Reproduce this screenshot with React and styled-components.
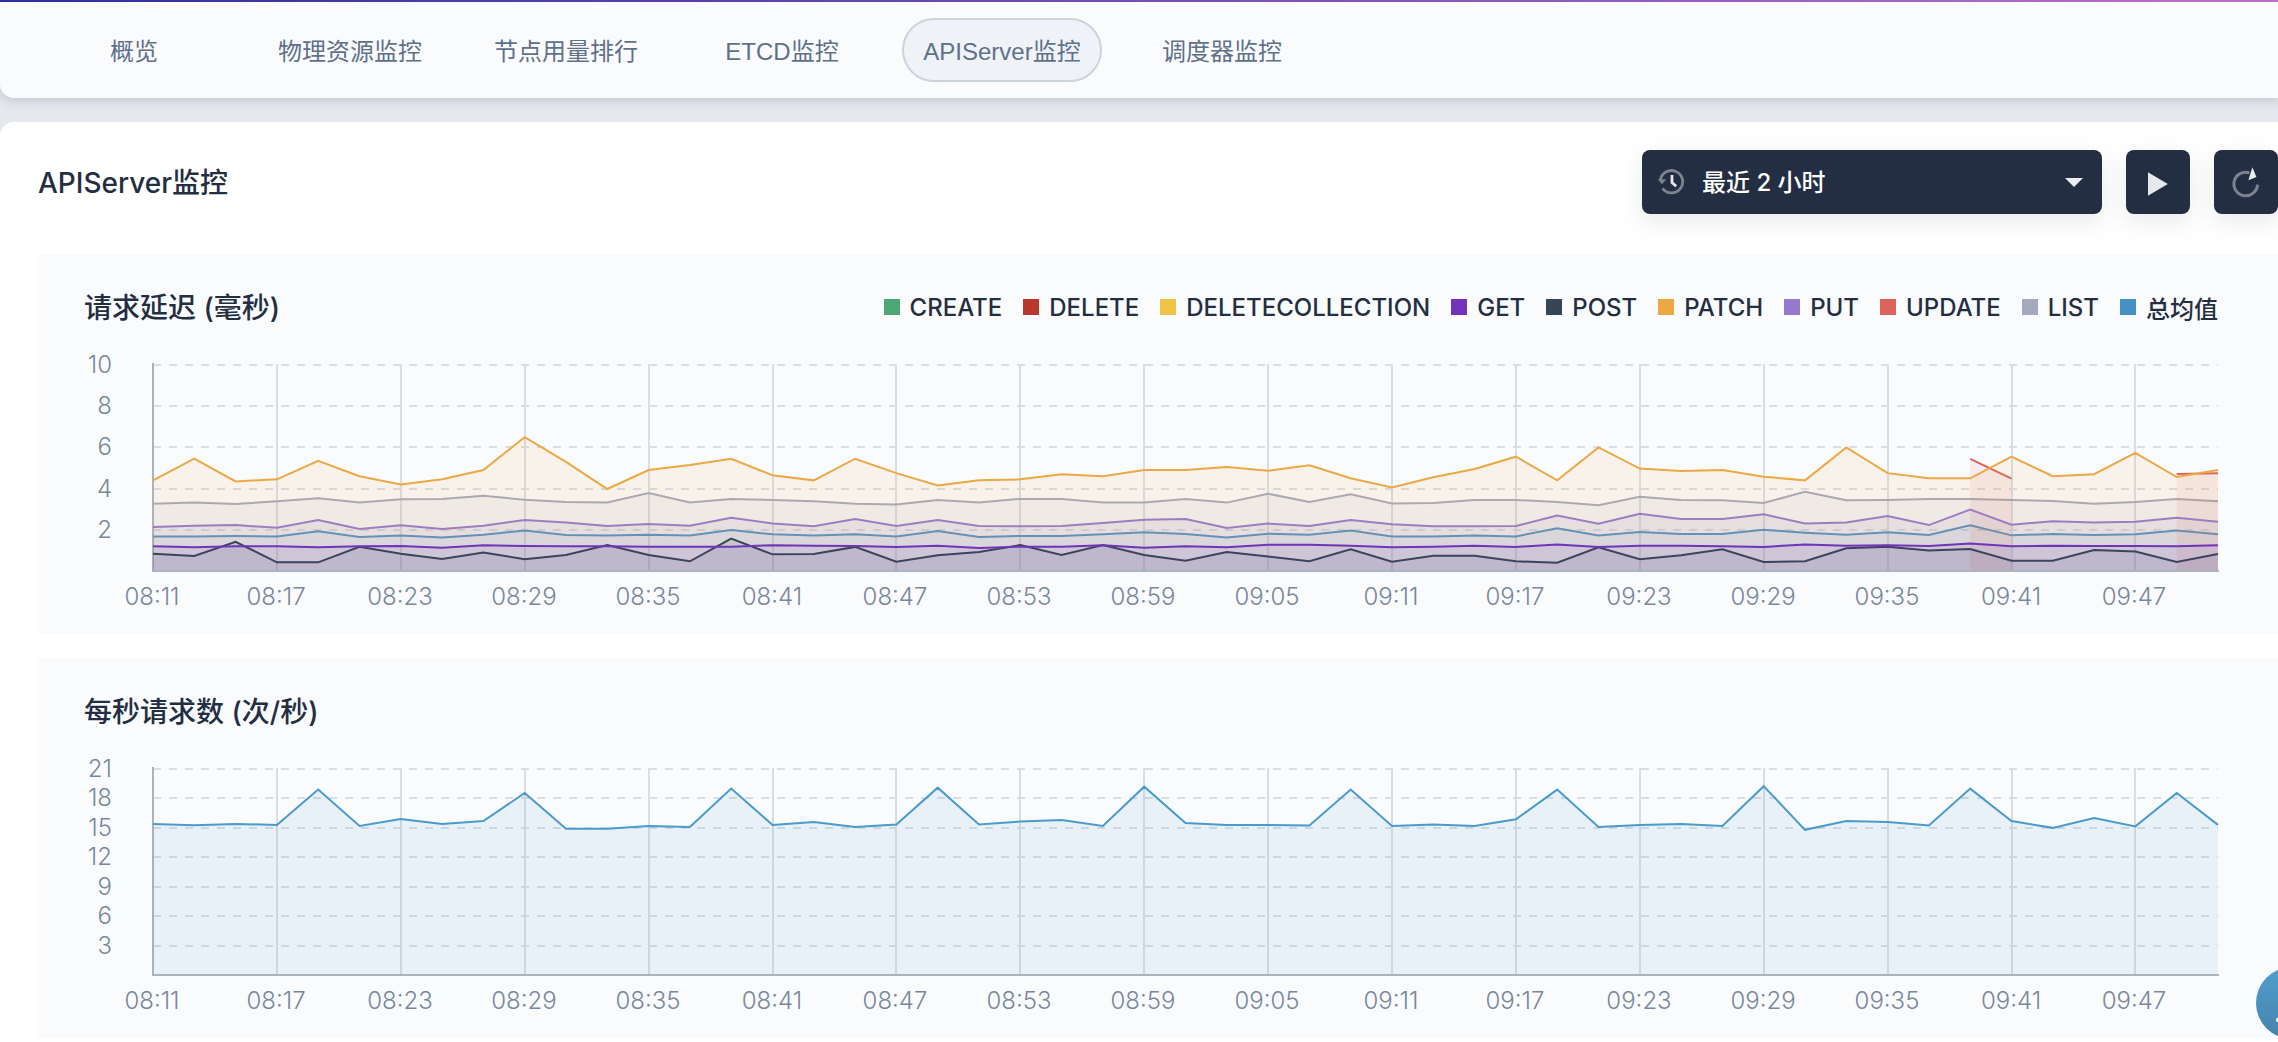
import { useLayoutEffect, useRef, useState } from "react";
import styled, { createGlobalStyle } from "styled-components";

const tabs = [
  "概览",
  "物理资源监控",
  "节点用量排行",
  "ETCD监控",
  "APIServer监控",
  "调度器监控",
];

const ranges = ["最近 2 小时", "最近 5 小时", "最近 12 小时", "最近 1 天"];

const times = [
  "08:11", "08:17", "08:23", "08:29", "08:35", "08:41", "08:47", "08:53", "08:59",
  "09:05", "09:11", "09:17", "09:23", "09:29", "09:35", "09:41", "09:47",
];

const gap = (count) => Array(count).fill(null);

const latency = [
  { name: "CREATE", color: "#4ca776", values: [] },
  { name: "DELETE", color: "#bb372b", values: [] },
  { name: "DELETECOLLECTION", color: "#f0c446", values: [] },
  {
    name: "GET",
    color: "#7033ba",
    values: [
      1.2, 1.15, 1.2, 1.2, 1.15, 1.2, 1.21, 1.13, 1.25, 1.21, 1.2, 1.2, 1.18,
      1.18, 1.18, 1.25, 1.23, 1.21, 1.17, 1.23, 1.12, 1.18, 1.18, 1.25, 1.13,
      1.2, 1.15, 1.28, 1.28, 1.23, 1.15, 1.18, 1.23, 1.17, 1.29, 1.17, 1.23,
      1.23, 1.2, 1.17, 1.29, 1.23, 1.25, 1.21, 1.33, 1.2, 1.23, 1.21, 1.21,
      1.2, 1.25,
    ],
  },
  {
    name: "POST",
    color: "#374655",
    values: [
      0.84, 0.73, 1.42, 0.42, 0.42, 1.18, 0.84, 0.58, 0.9, 0.57, 0.78, 1.26,
      0.78, 0.47, 1.57, 0.81, 0.83, 1.17, 0.45, 0.76, 0.92, 1.26, 0.78, 1.26,
      0.78, 0.5, 0.92, 0.7, 0.47, 1.05, 0.45, 0.74, 0.74, 0.47, 0.4, 1.15,
      0.57, 0.76, 1.05, 0.44, 0.47, 1.1, 1.18, 0.99, 1.07, 0.5, 0.5, 1.02,
      0.95, 0.44, 0.83,
    ],
  },
  {
    name: "PATCH",
    color: "#eba845",
    values: [
      4.4, 5.45, 4.35, 4.45, 5.35, 4.6, 4.2, 4.45, 4.9, 6.5, 5.3, 3.98, 4.9,
      5.15, 5.45, 4.65, 4.4, 5.45, 4.75, 4.15, 4.4, 4.45, 4.7, 4.6, 4.9, 4.9,
      5.05, 4.87, 5.13, 4.5, 4.05, 4.55, 4.95, 5.55, 4.4, 6, 4.97, 4.85, 4.9,
      4.58, 4.4, 6, 4.75, 4.5, 4.5, 5.55, 4.6, 4.7, 5.73, 4.56, 4.9,
    ],
  },
  {
    name: "PUT",
    color: "#9678d0",
    values: [
      2.14, 2.2, 2.23, 2.1, 2.48, 2.04, 2.22, 2.04, 2.2, 2.48, 2.35, 2.18,
      2.28, 2.2, 2.59, 2.31, 2.17, 2.52, 2.18, 2.48, 2.18, 2.17, 2.18, 2.33,
      2.49, 2.52, 2.09, 2.3, 2.18, 2.48, 2.27, 2.17, 2.17, 2.18, 2.69, 2.3,
      2.78, 2.52, 2.52, 2.75, 2.31, 2.36, 2.67, 2.23, 2.98, 2.25, 2.41, 2.36,
      2.39, 2.59, 2.39,
    ],
  },
  {
    name: "UPDATE",
    color: "#dc625c",
    values: [...gap(44), 5.44, 4.48, ...gap(3), 4.71, 4.74],
  },
  {
    name: "LIST",
    color: "#a4a9be",
    values: [
      3.27, 3.33, 3.25, 3.38, 3.53, 3.33, 3.48, 3.5, 3.65, 3.46, 3.35, 3.33,
      3.79, 3.33, 3.5, 3.45, 3.38, 3.27, 3.23, 3.45, 3.33, 3.5, 3.5, 3.32,
      3.32, 3.5, 3.32, 3.75, 3.35, 3.72, 3.28, 3.3, 3.45, 3.45, 3.35, 3.19,
      3.6, 3.45, 3.43, 3.3, 3.85, 3.43, 3.45, 3.5, 3.5, 3.45, 3.4, 3.27, 3.35,
      3.5, 3.38,
    ],
  },
  {
    name: "总均值",
    color: "#4590c5",
    values: [
      1.68, 1.68, 1.7, 1.68, 1.93, 1.65, 1.72, 1.63, 1.76, 1.96, 1.75, 1.72,
      1.76, 1.72, 1.99, 1.78, 1.72, 1.78, 1.68, 1.94, 1.65, 1.7, 1.7, 1.78,
      1.88, 1.8, 1.63, 1.81, 1.76, 1.96, 1.68, 1.68, 1.72, 1.68, 2.07, 1.72,
      1.89, 1.8, 1.8, 2, 1.86, 1.76, 1.88, 1.75, 2.22, 1.73, 1.8, 1.75, 1.78,
      1.97, 1.78,
    ],
  },
];

const requests = [
  {
    name: "每秒请求数",
    color: "#4a9bcb",
    values: [
      15.4, 15.26, 15.4, 15.3, 18.9, 15.2, 15.9, 15.4, 15.7, 18.55, 14.9, 14.9,
      15.2, 15.1, 19, 15.3, 15.6, 15.1, 15.35, 19.1, 15.35, 15.65, 15.8, 15.2,
      19.2, 15.5, 15.3, 15.3, 15.25, 18.9, 15.2, 15.35, 15.2, 15.87, 18.9,
      15.1, 15.3, 15.4, 15.2, 19.25, 14.8, 15.7, 15.6, 15.25, 19, 15.7, 15, 16,
      15.15, 18.55, 15.3,
    ],
  },
];

const LAST_POINT = 50;
const POINTS_PER_TICK = 3;
const PLOT = { left: 69, top: 19, bottom: 225 };

// cut a series into runs of points, so that missing samples leave a hole
function getSegments(values) {
  const segments = [];
  let current = [];
  values.forEach((value, index) => {
    if (value === null) {
      if (current.length) segments.push(current);
      current = [];
    } else {
      current.push([index, value]);
    }
  });
  if (current.length) segments.push(current);
  return segments;
}

function AreaChart({ series, ticks, label }) {
  const boxRef = useRef(null);
  const [width, setWidth] = useState(0);

  useLayoutEffect(() => {
    const measure = () => setWidth(boxRef.current.clientWidth);
    measure();
    const observer = new ResizeObserver(measure);
    observer.observe(boxRef.current);
    return () => observer.disconnect();
  }, []);

  const max = ticks[0];
  const getX = (index) =>
    PLOT.left + ((width - PLOT.left) * index) / LAST_POINT;
  const getY = (value) =>
    PLOT.bottom - ((PLOT.bottom - PLOT.top) * value) / max;

  return (
    <ChartBox ref={boxRef}>
      {width > 0 && (
        <ChartSvg role="img" aria-label={label}>
          {ticks.map((tick) => (
            <g key={tick}>
              <GridLine
                $dashed
                x1={PLOT.left}
                x2={width}
                y1={Math.round(getY(tick))}
                y2={Math.round(getY(tick))}
              />
              <AxisLabel x={28} y={Math.round(getY(tick)) + 8} textAnchor="end">
                {tick}
              </AxisLabel>
            </g>
          ))}
          {times.map((time, index) => {
            const x = Math.round(getX(index * POINTS_PER_TICK));
            return (
              <g key={time}>
                {index > 0 && (
                  <GridLine x1={x} x2={x} y1={PLOT.top - 1} y2={PLOT.bottom} />
                )}
                <AxisLabel x={x - 1} y={PLOT.bottom + 34} textAnchor="middle">
                  {time}
                </AxisLabel>
              </g>
            );
          })}
          <AxisLine
            x1={PLOT.left}
            x2={PLOT.left}
            y1={PLOT.top - 2}
            y2={PLOT.bottom}
          />
          {[...series].reverse().map(({ name, color, values }) =>
            getSegments(values).map((segment) => {
              const line = segment
                .map(([index, value]) => `${getX(index)},${getY(value)}`)
                .join(" L");
              const start = getX(segment[0][0]);
              const end = getX(segment[segment.length - 1][0]);
              return (
                <g key={`${name}-${segment[0][0]}`}>
                  <path
                    d={`M${start},${PLOT.bottom} L${line} L${end},${PLOT.bottom}Z`}
                    fill={color}
                    fillOpacity="0.1"
                  />
                  <path
                    d={`M${line}`}
                    fill="none"
                    stroke={color}
                    strokeWidth="2"
                  />
                </g>
              );
            })
          )}
          <AxisLine
            x1={PLOT.left - 1}
            x2={width + 1}
            y1={PLOT.bottom}
            y2={PLOT.bottom}
          />
        </ChartSvg>
      )}
    </ChartBox>
  );
}

function HistoryIcon() {
  return (
    <svg width="28" height="28" viewBox="0 0 28 28" fill="none" aria-hidden="true">
      <path
        d="M2.4 12.3A11.2 11.2 0 1 1 4.5 20.4"
        stroke="#7d838e"
        strokeWidth="2.8"
      />
      <path d="M-0.2 11.2h8.4l-4.2 5z" fill="#7d838e" />
      <path d="M14 7v7.6l4.2 3.6" stroke="#e6e8eb" strokeWidth="2.8" />
    </svg>
  );
}

function RefreshIcon() {
  return (
    <svg width="32" height="32" viewBox="0 0 32 32" fill="none" aria-hidden="true">
      <path
        d="M19.5 6.8A11.8 11.8 0 1 0 27.5 18.6"
        stroke="#7d838e"
        strokeWidth="3"
      />
      <path d="M22.4 1.3l4 9.6-8 3.3z" fill="#eceef0" />
    </svg>
  );
}

export default function App() {
  const [activeTab, setActiveTab] = useState("APIServer监控");
  const [range, setRange] = useState(ranges[0]);

  return (
    <Page>
      <GlobalStyle />
      <TabBar>
        {tabs.map((tab) => (
          <Tab
            key={tab}
            type="button"
            $active={tab === activeTab}
            onClick={() => setActiveTab(tab)}
          >
            {tab}
          </Tab>
        ))}
      </TabBar>
      <Panel>
        <PanelHeader>
          <PanelTitle>APIServer监控</PanelTitle>
          <Controls>
            <SelectBox>
              <HistoryIcon />
              <Select
                aria-label="时间范围"
                value={range}
                onChange={(event) => setRange(event.target.value)}
              >
                {ranges.map((option) => (
                  <option key={option}>{option}</option>
                ))}
              </Select>
              <Caret width="18" height="9" viewBox="0 0 18 9" aria-hidden="true">
                <path d="M0 0h18l-9 9z" fill="#eceef0" />
              </Caret>
            </SelectBox>
            <IconButton type="button" aria-label="播放">
              <svg width="32" height="32" viewBox="0 0 32 32" aria-hidden="true">
                <path d="M6 6.3v23.4l19.8-11.7z" fill="#e6e8eb" />
              </svg>
            </IconButton>
            <IconButton type="button" aria-label="刷新">
              <RefreshIcon />
            </IconButton>
          </Controls>
        </PanelHeader>
        <Card>
          <CardHeader>
            <CardTitle>请求延迟 (毫秒)</CardTitle>
            <Legend>
              {latency.map(({ name, color }) => (
                <LegendItem key={name} $color={color}>
                  {name}
                </LegendItem>
              ))}
            </Legend>
          </CardHeader>
          <AreaChart
            label="请求延迟"
            series={latency}
            ticks={[10, 8, 6, 4, 2]}
          />
        </Card>
        <Card>
          <CardHeader>
            <CardTitle>每秒请求数 (次/秒)</CardTitle>
          </CardHeader>
          <AreaChart
            label="每秒请求数"
            series={requests}
            ticks={[21, 18, 15, 12, 9, 6, 3]}
          />
        </Card>
      </Panel>
      <HelpButton type="button" aria-label="工具箱">
        <svg width="40" height="40" viewBox="0 0 40 40" aria-hidden="true">
          <path
            d="M6 37l10-10M24 5l11 11-9 9-11-11z"
            fill="none"
            stroke="#fff"
            strokeWidth="4"
            strokeLinecap="round"
          />
        </svg>
      </HelpButton>
    </Page>
  );
}

const GlobalStyle = createGlobalStyle`
  * {
    box-sizing: border-box;
  }

  body {
    margin: 0;
    background-color: #e5e9ee;
    color: #242e42;
    font-family: Inter, "Noto Sans CJK SC", sans-serif;
    font-size: 24px;
    overflow-x: hidden;
  }

  button,
  select {
    font: inherit;
    cursor: pointer;
  }
`;

const Page = styled.div`
  display: flex;
  flex-direction: column;
  gap: 24px;
  min-height: 100vh;

  &::before {
    content: "";
    position: fixed;
    inset: 0 0 auto;
    height: 2px;
    background: linear-gradient(90deg, #2c2ea2, #8d58bd 67%, #bb6fcc);
  }
`;

const TabBar = styled.nav`
  display: flex;
  align-items: center;
  gap: 20px;
  padding: 18px 36px 16px;
  background-color: #fafbfd;
  border-radius: 0 0 0 14px;
  box-shadow: 0 4px 8px rgba(36, 46, 66, 0.16);
`;

const Tab = styled.button`
  min-width: ${({ $active }) => ($active ? "200px" : "196px")};
  height: 64px;
  margin: ${({ $active }) => ($active ? "0 2px" : "0")};
  padding: 0 0 2px;
  border: ${({ $active }) => ($active ? "2px solid #ccd3db" : "none")};
  border-radius: 32px;
  background-color: ${({ $active }) => ($active ? "#eff3f8" : "transparent")};
  color: #5f708a;
  font-family: "Liberation Sans", "Noto Sans CJK SC", sans-serif;
`;

const Panel = styled.main`
  display: flex;
  flex-direction: column;
  flex: 1;
  gap: 24px;
  padding: 28px 0 4px 38px;
  background-color: #fff;
  border-radius: 14px 0 0 0;
`;

const PanelHeader = styled.header`
  display: flex;
  align-items: center;
  justify-content: space-between;
  margin-bottom: 16px;
`;

const PanelTitle = styled.h1`
  margin: 0;
  padding-bottom: 2px;
  font-size: 28px;
  font-weight: 500;
`;

const Controls = styled.div`
  display: flex;
  gap: 24px;
`;

const SelectBox = styled.div`
  position: relative;
  display: flex;
  align-items: center;
  width: 460px;
  height: 64px;
  padding-left: 16px;
  border-radius: 8px;
  background-color: #242e42;
  box-shadow: 0 8px 24px rgba(36, 46, 66, 0.1);
`;

const Select = styled.select`
  flex: 1;
  height: 100%;
  padding: 0 48px 0 16px;
  border: none;
  background: none;
  color: #fff;
  font-weight: 500;
  appearance: none;
`;

const Caret = styled.svg`
  position: absolute;
  right: 19px;
  pointer-events: none;
`;

const IconButton = styled.button`
  display: flex;
  align-items: center;
  justify-content: center;
  width: 64px;
  height: 64px;
  padding: 0;
  border: none;
  border-radius: 8px;
  background-color: #242e42;
  box-shadow: 0 8px 24px rgba(36, 46, 66, 0.1);
`;

const Card = styled.section`
  padding: 33px 60px 18px 46px;
  background-color: #fafbfd;
`;

const CardHeader = styled.div`
  display: flex;
  align-items: center;
  justify-content: space-between;
  height: 40px;
  margin-bottom: 19px;
`;

const CardTitle = styled.h2`
  margin: 0;
  padding-bottom: 2px;
  font-size: 28px;
  font-weight: 500;
`;

const Legend = styled.ul`
  display: flex;
  gap: 21px;
  margin: 0;
  padding: 0;
  list-style: none;
  font-weight: 500;
`;

const LegendItem = styled.li`
  display: flex;
  align-items: center;
  gap: 10px;

  &::before {
    content: "";
    width: 16px;
    height: 16px;
    background-color: ${({ $color }) => $color};
  }
`;

const ChartBox = styled.div`
  height: 270px;
`;

const ChartSvg = styled.svg`
  display: block;
  width: 100%;
  height: 100%;
  overflow: visible;
`;

const GridLine = styled.line`
  stroke: #d8dee5;
  stroke-width: 2;
  stroke-dasharray: ${({ $dashed }) => ($dashed ? "8 8" : "none")};
`;

const AxisLine = styled.line`
  stroke: #abb4be;
  stroke-width: 2;
`;

const AxisLabel = styled.text`
  fill: #79879c;
  font-size: 24px;
  font-weight: 300;
`;

const HelpButton = styled.button`
  position: fixed;
  right: -50px;
  bottom: 3px;
  display: flex;
  align-items: center;
  justify-content: center;
  width: 72px;
  height: 72px;
  padding: 0;
  border: none;
  border-radius: 50%;
  background: linear-gradient(#4f9fcd, #4683ae);
`;
